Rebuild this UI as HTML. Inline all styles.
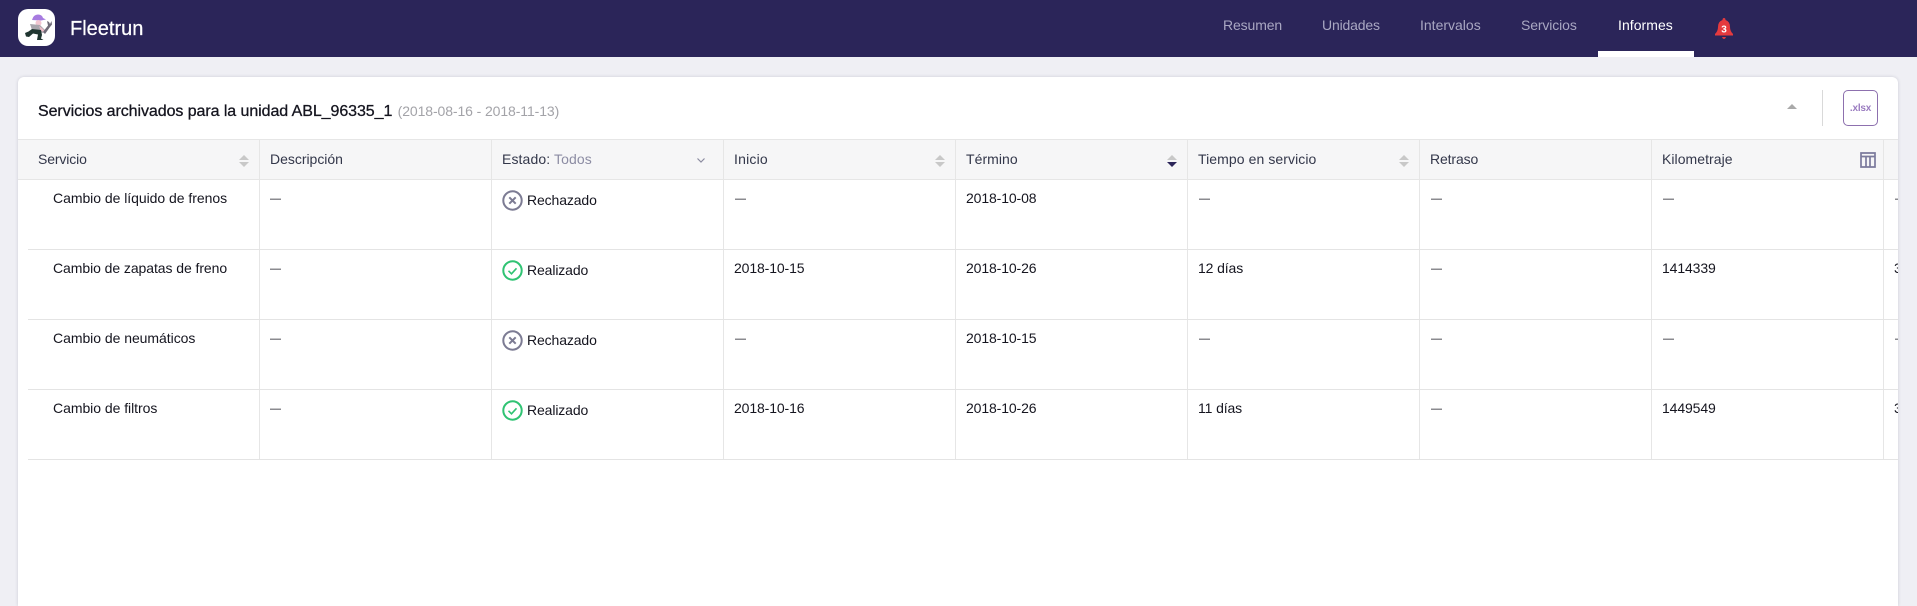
<!DOCTYPE html>
<html lang="es"><head><meta charset="utf-8"><title>Fleetrun</title>
<style>
html,body{margin:0;padding:0;width:1917px;height:606px;overflow:hidden;background:#efeff4;font-family:"Liberation Sans",sans-serif;color:#15151f}
div,span{box-sizing:border-box}
#wrap{position:relative;width:1917px;height:606px;overflow:hidden}
.a{position:absolute;white-space:nowrap;line-height:20px;font-size:14px;letter-spacing:-.12px}
.c{letter-spacing:-.04px}
.d{font-size:11px;letter-spacing:0;margin-top:1px}
#hdr{position:absolute;left:0;top:0;width:1917px;height:57px;background:#2b2559}
.n{color:#a9a7c2;top:15px}
#card{position:absolute;left:18px;top:77px;width:1880px;height:529px;background:#fff;border-radius:6px 6px 0 0;overflow:hidden;box-shadow:0 0 3px rgba(60,60,90,.2)}
#th{position:absolute;left:0;top:62px;width:1880px;height:41px;background:#f6f6f7;border-top:1px solid #e6e6e6;border-bottom:1px solid #e6e6e6}
.v{position:absolute;width:1px;background:#e6e6e6;top:62px;height:320px}
.h{position:absolute;left:10px;width:1870px;height:1px;background:#e4e4e4}
.th{top:72px;color:#33374a}
.up{position:absolute;width:0;height:0;border-left:5px solid transparent;border-right:5px solid transparent;border-bottom:5px solid #c8c8c8;top:78px}
.dn{position:absolute;width:0;height:0;border-left:5px solid transparent;border-right:5px solid transparent;border-top:5px solid #c8c8c8;top:85px}
</style></head><body><div id="wrap">
<div id="hdr">
<div style="position:absolute;left:18px;top:9px;width:37px;height:37px;background:#fff;border-radius:10px"></div>
<svg style="position:absolute;left:18px;top:9px" width="37" height="37" viewBox="0 0 37 37">
<path d="M14 11Q15.500 5.500 20 5.500Q24 5.500 25 9L28 10.500 23 11.500z" fill="#a77be0"/>
<circle cx="20.500" cy="14" r="3" fill="#f2c6d2"/>
<path d="M12 15L22 16 27 21 25 24 20 22 14 21z" fill="#a9a5ad"/>
<path d="M21 17L25 20 27 23 23 22z" fill="#eebcc8"/>
<path d="M14 20L23 21 24 26 23 29.500 25.500 31H19L20 25.500 15 24.500 11 28 8 27.500 7 24 10.500 22.500z" fill="#1f3530"/>
<path d="M25 23L30 16.500 29 12 31 13 32 15 33.500 12 34 15.500 32 18 27 25z" fill="#6f6b78"/>
</svg>
<div class="a" style="left:70px;top:17px;font-size:20px;line-height:24px;color:#fff;letter-spacing:0;-webkit-text-stroke:.25px #fff">Fleetrun</div>
<div class="a n" style="left:1223px">Resumen</div>
<div class="a n" style="left:1322px;letter-spacing:-.16px">Unidades</div>
<div class="a n" style="left:1420px;letter-spacing:0">Intervalos</div>
<div class="a n" style="left:1521px">Servicios</div>
<div class="a n" style="left:1618px;color:#fff;letter-spacing:.05px">Informes</div>
<div style="position:absolute;left:1598px;top:51px;width:96px;height:6px;background:#fff"></div>
<svg style="position:absolute;left:1714px;top:18px" width="20" height="21" viewBox="0 0 20 21">
<path d="M10 0q1.500 0 1.500 2 4.500 1.500 4.500 7 0 4 3 7v1.500H1V16q3-3 3-7 0-5.500 4.500-7Q8.500 0 10 0z" fill="#e53a3e"/>
<path d="M8 19h4q-.8 2-2 2T8 19z" fill="#e53a3e"/>
<text x="10" y="14.500" font-size="10" font-weight="700" fill="#fff" text-anchor="middle" font-family="Liberation Sans, sans-serif">3</text>
</svg>
</div>
<div id="card">
<div class="a" style="left:20px;top:24px;font-size:16px;letter-spacing:-.07px;-webkit-text-stroke:.3px #15151f">Servicios archivados para la unidad ABL_96335_1 <span style="font-size:14px;color:#a3a3a8;letter-spacing:-.1px;-webkit-text-stroke:0;margin-left:1px">(2018-08-16 - 2018-11-13)</span></div>
<div style="position:absolute;left:1769px;top:27px;width:0;height:0;border-left:5px solid transparent;border-right:5px solid transparent;border-bottom:5px solid #a9a9a9"></div>
<div style="position:absolute;left:1804px;top:13px;width:1px;height:36px;background:#d9d9d9"></div>
<div style="position:absolute;left:1825px;top:13px;width:35px;height:36px;border:1px solid #8d70ae;border-radius:5px;text-align:center;font-size:10px;line-height:36px;font-weight:700;color:#9a7cc0;letter-spacing:-.2px">.xlsx</div>
<div id="th"></div>
<div class="v" style="left:241px"></div>
<div class="v" style="left:473px"></div>
<div class="v" style="left:705px"></div>
<div class="v" style="left:937px"></div>
<div class="v" style="left:1169px"></div>
<div class="v" style="left:1401px"></div>
<div class="v" style="left:1633px"></div>
<div class="v" style="left:1865px"></div>
<div class="h" style="top:172px"></div><div class="h" style="top:242px"></div><div class="h" style="top:312px"></div><div class="h" style="top:382px"></div>

<div class="a th" style="left:20px">Servicio</div>
<div class="a th" style="left:252px;letter-spacing:-.02px">Descripción</div>
<div class="a th" style="left:484px;letter-spacing:.11px">Estado: <span style="color:#8c8ca3">Todos</span></div>
<div class="a th" style="left:716px;letter-spacing:.2px">Inicio</div>
<div class="a th" style="left:948px;letter-spacing:.05px">Término</div>
<div class="a th" style="left:1180px;letter-spacing:.08px">Tiempo en servicio</div>
<div class="a th" style="left:1412px">Retraso</div>
<div class="a th" style="left:1644px;letter-spacing:.05px">Kilometraje</div>

<div class="up" style="left:221px"></div><div class="dn" style="left:221px"></div>
<div class="up" style="left:917px"></div><div class="dn" style="left:917px"></div>
<div class="up" style="left:1149px"></div><div class="dn" style="left:1149px;border-top-color:#2b2559"></div>
<div class="up" style="left:1381px"></div><div class="dn" style="left:1381px"></div>
<svg style="position:absolute;left:678px;top:78px" width="10" height="10" viewBox="0 0 10 10"><path d="M1.500 3.500L5 7l3.500-3.500" fill="none" stroke="#8b8ba0" stroke-width="1.200"/></svg>
<svg style="position:absolute;left:1842px;top:75px" width="16" height="16" viewBox="0 0 16 16"><path d="M1 1h14v14H1zM1 4.500h14M6 4.500V15M10 4.500V15" fill="none" stroke="#7b7a9c" stroke-width="1.700"/></svg>

<div class="a c" style="left:35px;top:111px">Cambio de líquido de frenos</div>
<div class="a d" style="left:252px;top:111px">—</div>
<svg style="position:absolute;left:484px;top:113px" width="21" height="21" viewBox="0 0 21 21"><circle cx="10.500" cy="10.500" r="9.200" fill="none" stroke="#7c7b93" stroke-width="2"/><path d="M7.300 7.300l6.400 6.400M13.700 7.300l-6.400 6.400" stroke="#7c7b93" stroke-width="2"/></svg>
<div class="a" style="left:509px;top:113px">Rechazado</div>
<div class="a d" style="left:717px;top:111px">—</div>
<div class="a" style="left:948px;top:111px">2018-10-08</div>
<div class="a d" style="left:1181px;top:111px">—</div>
<div class="a d" style="left:1413px;top:111px">—</div>
<div class="a d" style="left:1645px;top:111px">—</div>
<div class="a d" style="left:1877px;top:111px">—</div>

<div class="a c" style="left:35px;top:181px;letter-spacing:-.07px">Cambio de zapatas de freno</div>
<div class="a d" style="left:252px;top:181px">—</div>
<svg style="position:absolute;left:484px;top:183px" width="21" height="21" viewBox="0 0 21 21"><circle cx="10.500" cy="10.500" r="9.200" fill="none" stroke="#2fc373" stroke-width="2"/><path d="M6.500 10.800l3 3 5-5.500" fill="none" stroke="#2fc373" stroke-width="1.600"/></svg>
<div class="a" style="left:509px;top:183px">Realizado</div>
<div class="a" style="left:716px;top:181px">2018-10-15</div>
<div class="a" style="left:948px;top:181px">2018-10-26</div>
<div class="a" style="left:1180px;top:181px">12 días</div>
<div class="a d" style="left:1413px;top:181px">—</div>
<div class="a" style="left:1644px;top:181px">1414339</div>
<div class="a" style="left:1876px;top:181px">3</div>

<div class="a c" style="left:35px;top:251px">Cambio de neumáticos</div>
<div class="a d" style="left:252px;top:251px">—</div>
<svg style="position:absolute;left:484px;top:253px" width="21" height="21" viewBox="0 0 21 21"><circle cx="10.500" cy="10.500" r="9.200" fill="none" stroke="#7c7b93" stroke-width="2"/><path d="M7.300 7.300l6.400 6.400M13.700 7.300l-6.400 6.400" stroke="#7c7b93" stroke-width="2"/></svg>
<div class="a" style="left:509px;top:253px">Rechazado</div>
<div class="a d" style="left:717px;top:251px">—</div>
<div class="a" style="left:948px;top:251px">2018-10-15</div>
<div class="a d" style="left:1181px;top:251px">—</div>
<div class="a d" style="left:1413px;top:251px">—</div>
<div class="a d" style="left:1645px;top:251px">—</div>
<div class="a d" style="left:1877px;top:251px">—</div>

<div class="a c" style="left:35px;top:321px">Cambio de filtros</div>
<div class="a d" style="left:252px;top:321px">—</div>
<svg style="position:absolute;left:484px;top:323px" width="21" height="21" viewBox="0 0 21 21"><circle cx="10.500" cy="10.500" r="9.200" fill="none" stroke="#2fc373" stroke-width="2"/><path d="M6.500 10.800l3 3 5-5.500" fill="none" stroke="#2fc373" stroke-width="1.600"/></svg>
<div class="a" style="left:509px;top:323px">Realizado</div>
<div class="a" style="left:716px;top:321px">2018-10-16</div>
<div class="a" style="left:948px;top:321px">2018-10-26</div>
<div class="a" style="left:1180px;top:321px">11 días</div>
<div class="a d" style="left:1413px;top:321px">—</div>
<div class="a" style="left:1644px;top:321px">1449549</div>
<div class="a" style="left:1876px;top:321px">3</div>
</div>
</div></body></html>
